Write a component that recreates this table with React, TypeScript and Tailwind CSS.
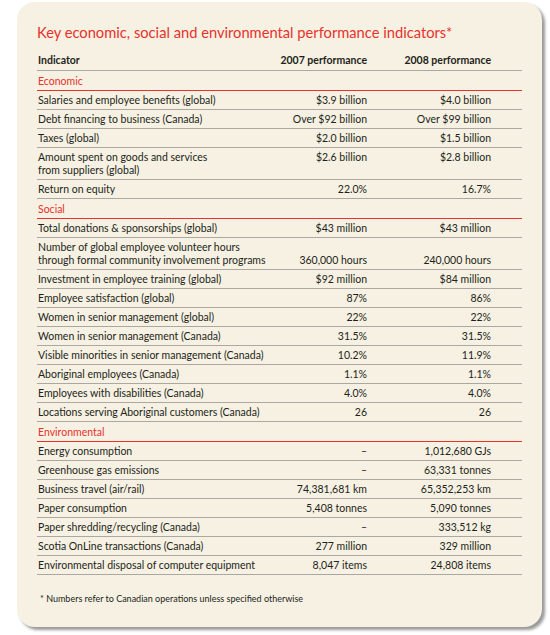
import React from 'react';

type Row = { label: string[]; y2007: string; y2008: string; bottom?: boolean };
type Section = { title: string; rows: Row[] };

const sections: Section[] = [
  {
    title: 'Economic',
    rows: [
      { label: ['Salaries and employee benefits (global)'], y2007: '$3.9 billion', y2008: '$4.0 billion' },
      { label: ['Debt financing to business (Canada)'], y2007: 'Over $92 billion', y2008: 'Over $99 billion' },
      { label: ['Taxes (global)'], y2007: '$2.0 billion', y2008: '$1.5 billion' },
      { label: ['Amount spent on goods and services', 'from suppliers (global)'], y2007: '$2.6 billion', y2008: '$2.8 billion' },
      { label: ['Return on equity'], y2007: '22.0%', y2008: '16.7%' },
    ],
  },
  {
    title: 'Social',
    rows: [
      { label: ['Total donations & sponsorships (global)'], y2007: '$43 million', y2008: '$43 million' },
      {
        label: ['Number of global employee volunteer hours', 'through formal community involvement programs'],
        y2007: '360,000 hours',
        y2008: '240,000 hours',
        bottom: true,
      },
      { label: ['Investment in employee training (global)'], y2007: '$92 million', y2008: '$84 million' },
      { label: ['Employee satisfaction (global)'], y2007: '87%', y2008: '86%' },
      { label: ['Women in senior management (global)'], y2007: '22%', y2008: '22%' },
      { label: ['Women in senior management (Canada)'], y2007: '31.5%', y2008: '31.5%' },
      { label: ['Visible minorities in senior management (Canada)'], y2007: '10.2%', y2008: '11.9%' },
      { label: ['Aboriginal employees (Canada)'], y2007: '1.1%', y2008: '1.1%' },
      { label: ['Employees with disabilities (Canada)'], y2007: '4.0%', y2008: '4.0%' },
      { label: ['Locations serving Aboriginal customers (Canada)'], y2007: '26', y2008: '26' },
    ],
  },
  {
    title: 'Environmental',
    rows: [
      { label: ['Energy consumption'], y2007: '–', y2008: '1,012,680 GJs' },
      { label: ['Greenhouse gas emissions'], y2007: '–', y2008: '63,331 tonnes' },
      { label: ['Business travel (air/rail)'], y2007: '74,381,681 km', y2008: '65,352,253 km' },
      { label: ['Paper consumption'], y2007: '5,408 tonnes', y2008: '5,090 tonnes' },
      { label: ['Paper shredding/recycling (Canada)'], y2007: '–', y2008: '333,512 kg' },
      { label: ['Scotia OnLine transactions (Canada)'], y2007: '277 million', y2008: '329 million' },
      { label: ['Environmental disposal of computer equipment'], y2007: '8,047 items', y2008: '24,808 items' },
    ],
  },
];

const DataRow: React.FC<{ row: Row }> = ({ row }) => (
  <div className="flex border-b border-[#a9a8a3] pt-[3px] pb-[2px] leading-[13px]">
    <div className="flex-1 pl-[1px] whitespace-nowrap">
      {row.label.map((l) => (
        <div key={l}>{l}</div>
      ))}
    </div>
    <div className={row.bottom ? 'w-[100px] text-right self-end whitespace-nowrap' : 'w-[100px] text-right whitespace-nowrap'}>
      {row.y2007}
    </div>
    <div className={row.bottom ? 'w-[124px] text-right self-end whitespace-nowrap' : 'w-[124px] text-right whitespace-nowrap'}>
      {row.y2008}
    </div>
    <div className="w-[31px]" />
  </div>
);

export default function App() {
  return (
    <div className="w-[550px] h-[635px] bg-white pt-[2px] pl-[17px]" style={{ fontFamily: 'Lato, "Open Sans", sans-serif' }}>
      <div className="w-[525px] h-[625px] rounded-[18px] bg-[#f6f1e2] shadow-[3px_3px_3px_rgba(0,0,0,0.4)] pl-[20px] pt-[21px] text-[10.5px] text-[#231f20]">
        <h1 className="text-[14.7px] leading-[18px] text-[#e8322b] mb-[12px] whitespace-nowrap">
          Key economic, social and environmental performance indicators*
        </h1>

        <div className="w-[485px]">
          <div className="flex border-b border-[#a9a8a3] pb-[3px] leading-[14px] font-bold">
            <div className="flex-1 pl-[1px]">Indicator</div>
            <div className="w-[100px] text-right whitespace-nowrap">2007 performance</div>
            <div className="w-[124px] text-right whitespace-nowrap">2008 performance</div>
            <div className="w-[31px]" />
          </div>

          {sections.map((s) => (
            <div key={s.title}>
              <div className="border-b border-[#e8322b] pt-[4px] pb-[2px] leading-[13px] pl-[1px] text-[#e8322b]">
                {s.title}
              </div>
              {s.rows.map((r) => (
                <DataRow key={r.label[0]} row={r} />
              ))}
            </div>
          ))}
        </div>

        <p className="mt-[18px] pl-[3px] text-[9px] leading-[12px]">
          * Numbers refer to Canadian operations unless specified otherwise
        </p>
      </div>
    </div>
  );
}
